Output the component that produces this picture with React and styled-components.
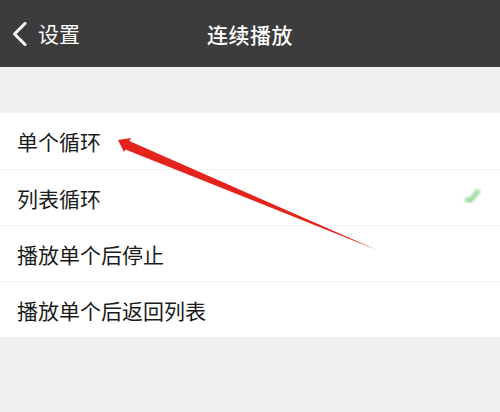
import React from "react";
import styled, { createGlobalStyle } from "styled-components";

const GlobalStyle = createGlobalStyle`
  body {
    margin: 0;
    font-family: "Noto Sans CJK SC", "Noto Sans", sans-serif;
    background: #efefef;
  }
`;

const Page = styled.div`
  position: relative;
  width: 500px;
  height: 412px;
  background: #efefef;
  overflow: hidden;
`;

const TopBar = styled.header`
  display: grid;
  grid-template-columns: 1fr auto 1fr;
  align-items: center;
  height: 67px;
  background: #3c3c3c;
  color: #ffffff;
`;

const Back = styled.div`
  display: flex;
  align-items: center;
  gap: 11px;
  padding-left: 12px;
  font-size: 21px;
  line-height: 1;

  svg {
    width: 15px;
    height: 24px;
  }
`;

const Title = styled.h1`
  margin: 0;
  font-size: 21px;
  font-weight: 500;
  letter-spacing: 0.5px;
`;

const List = styled.ul`
  list-style: none;
  margin: 46px 0 0;
  padding: 0;
  background: #ffffff;
`;

const Row = styled.li`
  display: flex;
  align-items: center;
  justify-content: space-between;
  height: 56px;
  padding: 0 16px 0 17px;
  font-size: 21px;
  color: #1b1b1b;
  border-top: ${(p) => (p.first ? "none" : "1px solid #f1f1f1")};
  box-sizing: border-box;
`;

const Check = styled.svg`
  width: 22px;
  height: 22px;
  margin-bottom: 6px;
`;

const Overlay = styled.svg`
  position: absolute;
  left: 0;
  top: 0;
  pointer-events: none;
`;

const items = ["单个循环", "列表循环", "播放单个后停止", "播放单个后返回列表"];

export default function App() {
  return (
    <>
      <GlobalStyle />
      <Page>
        <TopBar>
          <Back>
            <svg viewBox="0 0 15 24" fill="none">
              <path d="M13 1.5 L2.5 12 L13 22.5" stroke="#fff" strokeWidth="3" strokeLinecap="round" strokeLinejoin="round" />
            </svg>
            设置
          </Back>
          <Title>连续播放</Title>
          <div />
        </TopBar>
        <List>
          {items.map((t, i) => (
            <Row key={t} first={i === 0}>
              {t}
              {i === 1 && (
                <Check viewBox="0 0 22 22">
                  <defs>
                    <filter id="blur">
                      <feGaussianBlur stdDeviation="1.8" />
                    </filter>
                  </defs>
                  <path d="M3 15 L8 17 L17 6" stroke="#8fd48f" strokeWidth="5" fill="none" filter="url(#blur)" opacity="0.85" />
                </Check>
              )}
            </Row>
          ))}
        </List>
        <Overlay width="500" height="412" viewBox="0 0 500 412">
          <polygon points="118,140 131,138 129.3,140.9 377,250 125.4,149.6 124,152" fill="#e5231d" />
        </Overlay>
      </Page>
    </>
  );
}
